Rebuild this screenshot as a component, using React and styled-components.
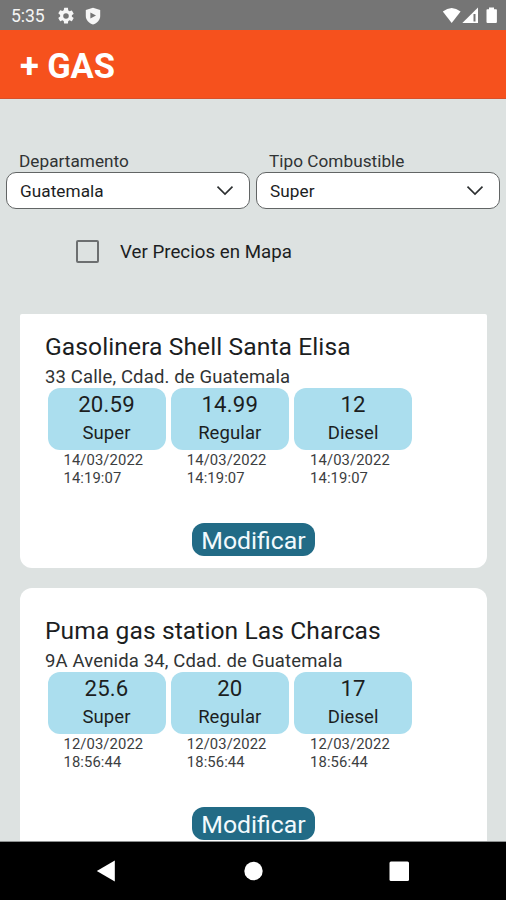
import React from "react";
import styled, { createGlobalStyle } from "styled-components";

const GlobalStyle = createGlobalStyle`
  * { box-sizing: border-box; }
  body { margin: 0; font-family: Roboto, sans-serif; color: #1c1e1f; }
`;

const Screen = styled.div`
  display: flex;
  flex-direction: column;
  width: 506px;
  height: 900px;
  overflow: hidden;
  background: #dde2e1;
`;

const StatusBar = styled.header`
  display: flex;
  align-items: center;
  justify-content: space-between;
  flex: 0 0 30px;
  padding: 0 8px 0 11px;
  background: #757575;
  color: #f4f4f4;
`;

const StatusGroup = styled.div`
  display: flex;
  align-items: center;
  height: 30px;
  padding-top: 1px;
`;

const Clock = styled.span`
  width: 46px;
  font-size: 17.6px;
  line-height: 30px;
  letter-spacing: -0.1px;
`;

const AppBar = styled.div`
  flex: 0 0 69px;
  height: 69px;
  overflow: hidden;
  padding-left: 20px;
  background: #f6511d;
  border-bottom: 1px solid #d8502a;
`;

const AppTitle = styled.h1`
  margin: 0;
  color: #fff;
  font-size: 34.5px;
  font-weight: 700;
  line-height: 72px;
  letter-spacing: -0.1px;
`;

const Content = styled.main`
  flex: 1;
  min-height: 0;
  overflow: hidden;
  border-bottom: 1px solid #8d9090;
`;

const Filters = styled.div`
  display: flex;
  gap: 6px;
  padding: 51px 6px 0 6px;
`;

const Field = styled.label`
  flex: 1;
`;

const FieldLabel = styled.span`
  display: block;
  height: 22px;
  padding-left: 13px;
  font-size: 17.2px;
  line-height: 22px;
  letter-spacing: 0.03px;
  color: #303334;
`;

const Select = styled.div`
  display: flex;
  align-items: center;
  justify-content: space-between;
  height: 37px;
  padding: 0 15px 0 13px;
  background: #fff;
  border: 1px solid #626565;
  border-radius: 10px;
  font-size: 17.2px;
  letter-spacing: 0.05px;
`;

const CheckRow = styled.div`
  display: flex;
  align-items: center;
  gap: 21px;
  height: 24px;
  margin: 30px 0 0 76px;
  font-size: 18.7px;
`;

const CheckLabel = styled.span`
  padding-top: 2px;
  letter-spacing: 0.02px;
`;

const Checkbox = styled.span`
  width: 23px;
  height: 23px;
  border: 2px solid #6c6f70;
  border-radius: 2px;
`;

const Stations = styled.div`
  display: flex;
  flex-direction: column;
  gap: 20px;
  padding: 51px 19px 0 20px;
`;

const Card = styled.article`
  height: ${(p) => (p.$first ? 254 : 264)}px;
  padding: ${(p) => (p.$first ? 17 : 27)}px 25px 0;
  background: #fff;
  border-radius: ${(p) => (p.$first ? "2px 2px 12px 12px" : "12px")};
`;

const StationName = styled.h2`
  margin: 0;
  font-size: 24.6px;
  font-weight: 400;
  line-height: 31px;
  letter-spacing: 0.09px;
`;

const Address = styled.p`
  margin: 0;
  padding-top: 5px;
  font-size: 18.5px;
  line-height: 21px;
  letter-spacing: 0.14px;
  color: #303334;
`;

const Prices = styled.div`
  display: grid;
  grid-template-columns: repeat(3, 118px);
  gap: 5.3px;
  margin-left: 2.5px;
`;

const PriceBox = styled.div`
  height: 62px;
  background: #abdeee;
  border-radius: 12px;
  text-align: center;
`;

const Price = styled.div`
  font-size: 22.2px;
  line-height: 33px;
  letter-spacing: 0.2px;
`;

const Fuel = styled.div`
  font-size: 18.5px;
  line-height: 24px;
  letter-spacing: 0.1px;
`;

const Updated = styled.div`
  padding: 2px 0 0 16px;
  font-size: 14.8px;
  line-height: 17.5px;
  letter-spacing: 0.1px;
  color: #3c3e3f;
`;

const EditButton = styled.button`
  display: block;
  width: 123px;
  height: 33px;
  margin: 36px auto 0;
  padding: 2px 0 0;
  border: 0;
  border-radius: 12px;
  background: #226b86;
  color: #f2fafd;
  font: 400 24.8px/31px Roboto, sans-serif;
`;

const NavBar = styled.nav`
  display: flex;
  align-items: center;
  flex: 0 0 58px;
  padding-left: 96px;
  background: #000;
`;

const Gear = () => (
  <svg width="18" height="18" viewBox="1 1 22 22" fill="#f6f6f6">
    <path d="M19.14 12.94c.04-.3.06-.61.06-.94s-.02-.64-.07-.94l2.03-1.58a.49.49 0 0 0 .12-.61l-1.92-3.32a.49.49 0 0 0-.59-.22l-2.39.96a7 7 0 0 0-1.62-.94l-.36-2.54A.48.48 0 0 0 13.92 2h-3.84a.48.48 0 0 0-.47.41l-.36 2.54c-.59.24-1.13.57-1.62.94l-2.39-.96a.48.48 0 0 0-.59.22L2.74 8.47a.48.48 0 0 0 .12.61l2.03 1.58c-.05.3-.09.63-.09.94s.02.64.07.94l-2.03 1.58a.49.49 0 0 0-.12.61l1.92 3.32c.12.22.37.29.59.22l2.39-.96c.5.38 1.03.7 1.62.94l.36 2.54c.05.24.24.41.48.41h3.84c.24 0 .44-.17.47-.41l.36-2.54a6.8 6.8 0 0 0 1.62-.94l2.39.96c.22.08.47 0 .59-.22l1.92-3.32a.48.48 0 0 0-.12-.61zM12 15.4a3.4 3.4 0 1 1 0-6.8 3.4 3.4 0 0 1 0 6.8z" />
  </svg>
);

const ShieldIcon = styled.svg`
  margin-left: 10px;
`;

const Shield = () => (
  <ShieldIcon width="16" height="18" viewBox="0 0 16 18">
    <path d="M8 .8 15.2 3v6c0 4-3 7.2-7.2 8.5C3.8 16.2.8 13 .8 9V3z" fill="#f6f6f6" />
    <path d="M5.4 5.5v6L11 8.500z" fill="#757575" />
  </ShieldIcon>
);

const Signals = () => (
  <svg width="56" height="18" viewBox="0 0 56 18" fill="#fff">
    <path d="M.8 4.600Q9.700-2.400 18.600 4.600L9.700 16z" />
    <path d="M36 .5V16H20.300z" />
    <path d="M31.500 7h2v7.500h-2z" fill="#757575" />
    <path d="M47 .5h5v1.700h2.100q.8 0 .8.800V15q0 1-1 1h-8.400q-1 0-1-1V3q0-.8.8-.8h1.700z" />
  </svg>
);

const Chevron = () => (
  <svg width="18" height="11" viewBox="0 0 18 11" fill="none" stroke="#2c2f30" strokeWidth="1.6">
    <path d="M1.500 1.600 9 9.100l7.500-7.500" />
  </svg>
);

const NavIcons = () => (
  <svg width="314" height="24" viewBox="0 0 314 24" fill="#fff">
    <path d="M.8 12 18.800 1.400v21.200z" />
    <circle cx="157.500" cy="12" r="9.200" />
    <rect x="293.500" y="2.500" width="19.500" height="19.500" rx="1.500" />
  </svg>
);

const stations = [
  {
    name: "Gasolinera Shell Santa Elisa",
    address: "33 Calle, Cdad. de Guatemala",
    prices: [["20.59", "Super"], ["14.99", "Regular"], ["12", "Diesel"]],
    date: "14/03/2022",
    time: "14:19:07",
  },
  {
    name: "Puma gas station Las Charcas",
    address: "9A Avenida 34, Cdad. de Guatemala",
    prices: [["25.6", "Super"], ["20", "Regular"], ["17", "Diesel"]],
    date: "12/03/2022",
    time: "18:56:44",
  },
];

export default function App() {
  return (
    <Screen>
      <GlobalStyle />
      <StatusBar>
        <StatusGroup>
          <Clock>5:35</Clock>
          <Gear />
          <Shield />
        </StatusGroup>
        <StatusGroup>
          <Signals />
        </StatusGroup>
      </StatusBar>
      <AppBar>
        <AppTitle>+ GAS</AppTitle>
      </AppBar>
      <Content>
        <Filters>
          <Field>
            <FieldLabel>Departamento</FieldLabel>
            <Select>Guatemala<Chevron /></Select>
          </Field>
          <Field>
            <FieldLabel>Tipo Combustible</FieldLabel>
            <Select>Super<Chevron /></Select>
          </Field>
        </Filters>
        <CheckRow>
          <Checkbox />
          <CheckLabel>Ver Precios en Mapa</CheckLabel>
        </CheckRow>
        <Stations>
          {stations.map((s, i) => (
            <Card key={s.name} $first={i === 0}>
              <StationName>{s.name}</StationName>
              <Address>{s.address}</Address>
              <Prices>
                {s.prices.map(([price, fuel]) => (
                  <div key={fuel}>
                    <PriceBox>
                      <Price>{price}</Price>
                      <Fuel>{fuel}</Fuel>
                    </PriceBox>
                    <Updated>
                      {s.date}
                      <br />
                      {s.time}
                    </Updated>
                  </div>
                ))}
              </Prices>
              <EditButton>Modificar</EditButton>
            </Card>
          ))}
        </Stations>
      </Content>
      <NavBar>
        <NavIcons />
      </NavBar>
    </Screen>
  );
}
